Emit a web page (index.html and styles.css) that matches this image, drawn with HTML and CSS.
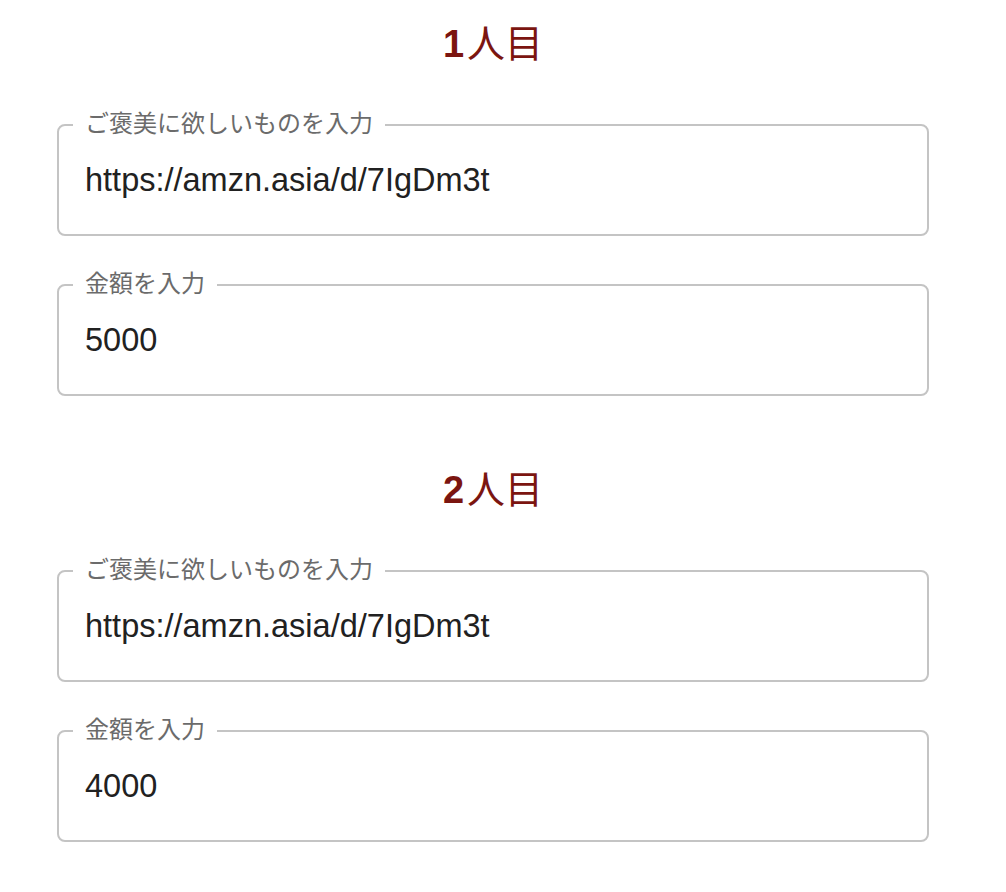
FILE: index.html
```html
<!DOCTYPE html>
<html lang="ja">
<head>
<meta charset="utf-8">
<title>ご褒美</title>
<link rel="stylesheet" href="styles.css">
</head>
<body>
<main class="page">
  <section class="person">
    <h2 class="title"><span class="num">1</span>人目</h2>
    <div class="field">
      <span class="label">ご褒美に欲しいものを入力</span>
      <div class="value">https://amzn.asia/d/7IgDm3t</div>
    </div>
    <div class="field">
      <span class="label">金額を入力</span>
      <div class="value">5000</div>
    </div>
  </section>
  <section class="person">
    <h2 class="title"><span class="num">2</span>人目</h2>
    <div class="field">
      <span class="label">ご褒美に欲しいものを入力</span>
      <div class="value">https://amzn.asia/d/7IgDm3t</div>
    </div>
    <div class="field">
      <span class="label">金額を入力</span>
      <div class="value">4000</div>
    </div>
  </section>
</main>
</body>
</html>
```
FILE: styles.css
```css
html, body {
  margin: 0;
  padding: 0;
  background: #ffffff;
}
body {
  font-family: "Liberation Sans", "Noto Sans CJK JP", sans-serif;
}
.page {
  width: 872px;
  margin-left: 57px;
  padding-top: 21px;
  display: flex;
  flex-direction: column;
  gap: 71px;
}
.person {
  display: flex;
  flex-direction: column;
  gap: 48px;
}
.title {
  margin: 0 0 9px 0;
  text-align: center;
  font-size: 38px;
  line-height: 46px;
  font-weight: 400;
  color: #7b1510;
}
.num {
  font-weight: 700;
  margin-right: 3px;
}
.field {
  position: relative;
  box-sizing: border-box;
  height: 112px;
  border: 2px solid #c4c4c4;
  border-radius: 8px;
  display: flex;
  align-items: center;
}
.label {
  position: absolute;
  top: -16px;
  left: 14px;
  padding: 0 12px;
  background: #ffffff;
  font-family: "Noto Sans CJK JP", sans-serif;
  font-size: 24px;
  line-height: 24px;
  color: #6b6b6b;
}
.value {
  padding: 0 26px;
  font-size: 32.5px;
  line-height: 40px;
  color: #212121;
}
```
